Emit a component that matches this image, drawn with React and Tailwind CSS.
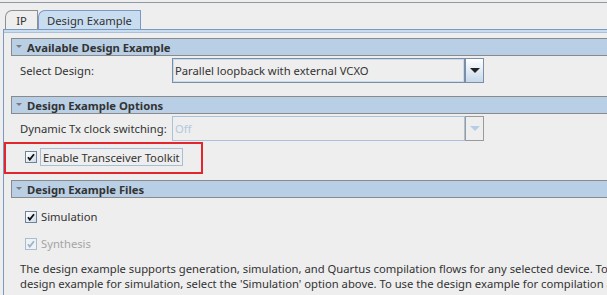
import React from 'react';

const Check = ({ disabled }) => (
  <span
    className={`flex h-[12px] w-[12px] shrink-0 items-center justify-center border ${
      disabled ? 'border-[#a9bcd0] bg-[#eef2f6]' : 'border-[#6e8299] bg-gradient-to-br from-white to-[#cfdcea]'
    }`}
  >
    <svg width="8" height="8" viewBox="0 0 8 8">
      <path
        d="M1 4.2 L2.8 6.6 L7 1.2"
        fill="none"
        stroke={disabled ? '#9fb3c8' : '#111'}
        strokeWidth="1.8"
      />
    </svg>
  </span>
);

const SectionHeader = ({ title }) => (
  <div className="ml-[7px] flex h-[18px] items-center border-y border-l border-[#8a8a8a] bg-[#b8cfe5]">
    <svg width="12" height="8" viewBox="0 0 12 8" className="ml-[2px]">
      <path d="M2 2 L8 2 L5 5 Z" fill="#7a7a7a" />
    </svg>
    <span className="ml-px font-bold text-[#333]">{title}</span>
  </div>
);

const Arrow = ({ disabled }) => (
  <span
    className={`flex h-[25px] w-[19px] items-center justify-center border ${
      disabled ? 'border-[#9a9a9a] bg-[#eeeeee]' : 'border-[#7a8ea5] bg-gradient-to-b from-white to-[#c6d8ea]'
    }`}
  >
    <svg width="10" height="6" viewBox="0 0 10 6">
      <path d="M0 0 L10 0 L5 5 Z" fill={disabled ? '#b5cde6' : '#222'} />
    </svg>
  </span>
);

export default function App() {
  return (
    <div
      className="h-[295px] w-[607px] overflow-hidden bg-[#eeeeee] text-[11.25px] leading-[15px] text-[#333]"
      style={{ fontFamily: '"Noto Sans", "Open Sans", sans-serif' }}
    >
      <div className="h-[2px]" />
      <div className="h-px bg-[#8d99a7]" />

      {/* tabs */}
      <div className="flex items-end pl-[5px] pt-[7px]">
        <div className="flex h-[19px] w-[33px] items-center justify-center rounded-tl-[7px] border border-b-0 border-[#8f8f8f] bg-[#eeeeee]">
          IP
        </div>
        <div className="flex h-[19px] w-[103px] items-center justify-center rounded-tl-[7px] border border-b-0 border-[#7a98c2] bg-[#c9ddf0]">
          Design Example
        </div>
      </div>

      {/* panel */}
      <div className="ml-[3px] border-l border-t border-[#7b98be]">
        <div className="h-[2px] bg-[#c9ddf0]" />
        <div className="h-px bg-[#a9c0d8]" />

        <div className="pt-[5px]">
          <SectionHeader title="Available Design Example" />

          <div className="mt-[2px] flex h-[25px] items-center">
            <span className="w-[168px] whitespace-nowrap pl-[16px]">Select Design:</span>
            <div className="flex">
              <div className="flex h-[25px] w-[293px] items-center border border-[#7a8ea5]">
                <div className="flex h-full w-full items-center border border-[#c8dbee] pl-[1px]">
                  Parallel loopback with external VCXO
                </div>
              </div>
              <Arrow />
            </div>
          </div>

          <div className="mt-[13px]">
            <SectionHeader title="Design Example Options" />
          </div>

          <div className="mt-[2px] flex h-[25px] items-center">
            <span className="w-[168px] whitespace-nowrap pl-[16px]">Dynamic Tx clock switching:</span>
            <div className="flex">
              <div className="flex h-[25px] w-[293px] items-center border border-[#a9c1db] pl-[2px] text-[#b3c9e0]">
                Off
              </div>
              <Arrow disabled />
            </div>
          </div>

          <div className="relative h-[39px]">
            <div className="flex items-center pl-[21px] pt-[7px]">
              <Check />
              <span className="ml-[3px] flex h-[18px] items-center border border-[#a7bed6] px-[2px]">
                Enable Transceiver Toolkit
              </span>
            </div>
            <div className="absolute left-0 top-[1px] h-[32px] w-[199px] border-2 border-[#e3262b]" />
          </div>

          <SectionHeader title="Design Example Files" />

          <div className="mt-[11px] flex items-center pl-[21px]">
            <Check />
            <span className="ml-[4px]">Simulation</span>
          </div>
          <div className="mt-[12px] flex items-center pl-[21px]">
            <Check disabled />
            <span className="ml-[4px] text-[#a5a5a5]">Synthesis</span>
          </div>

          <p className="mt-[10px] whitespace-nowrap pl-[16px]">
            The design example supports generation, simulation, and Quartus compilation flows for any selected device. To use the
            <br />
            design example for simulation, select the 'Simulation' option above. To use the design example for compilation and
            <br />
            hardware testing, select the 'Synthesis' option above.
          </p>
        </div>
      </div>
    </div>
  );
}
